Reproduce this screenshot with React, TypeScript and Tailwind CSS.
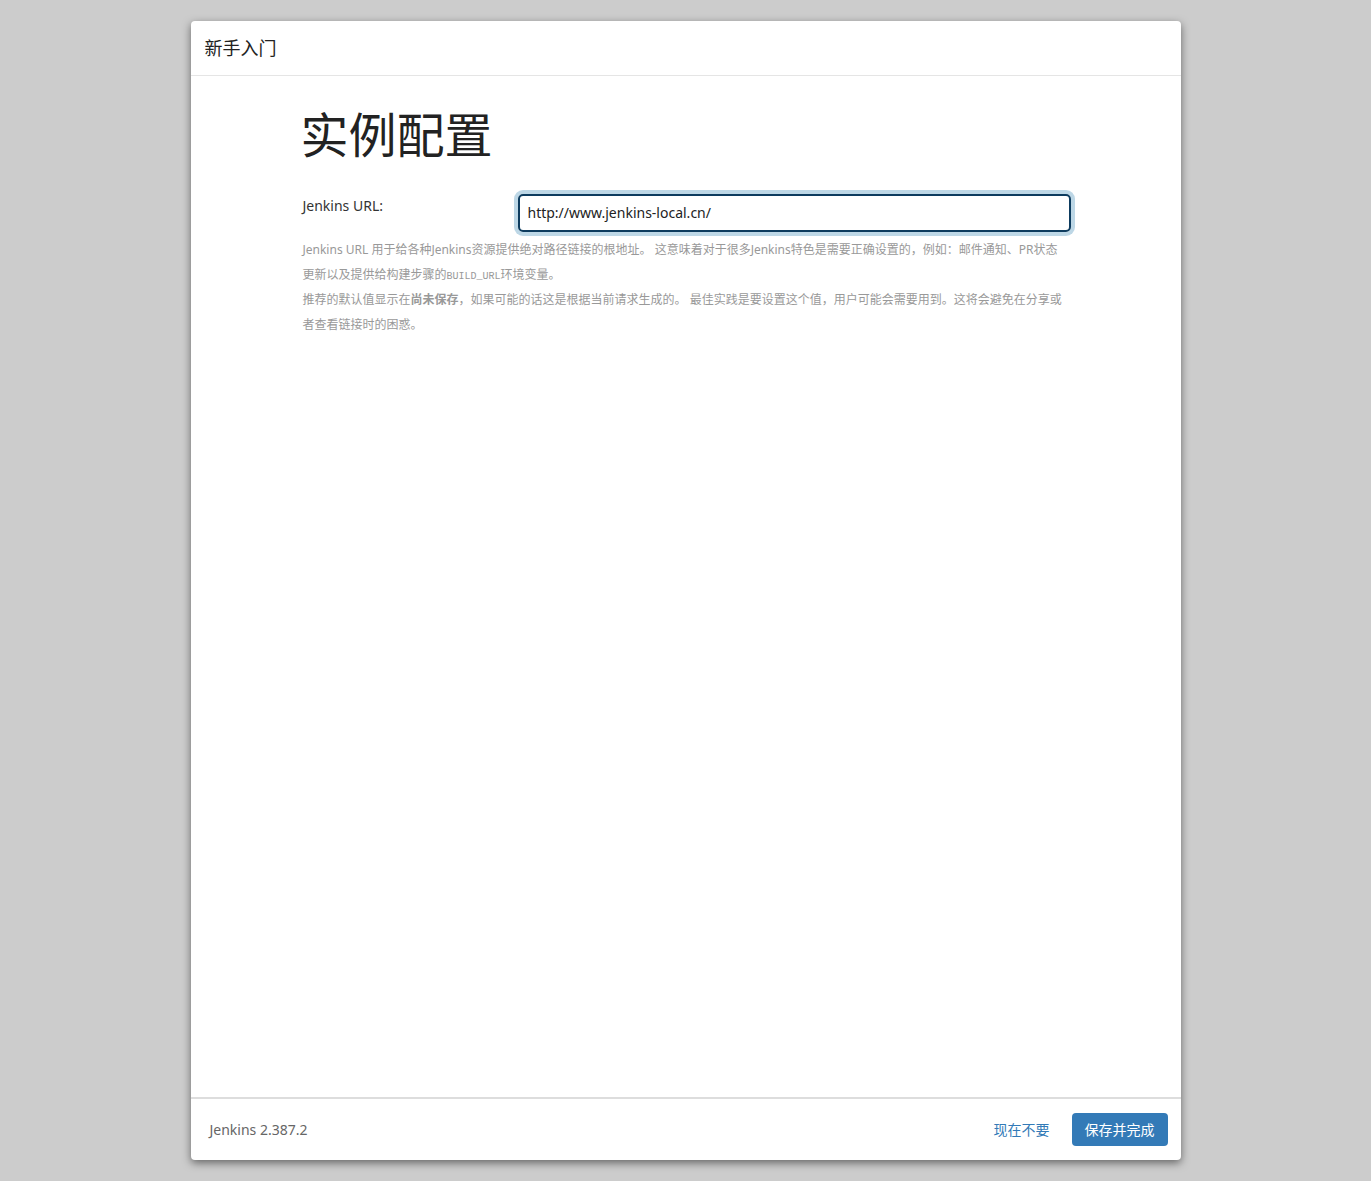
const cjk = '"Noto Sans", "Noto Sans CJK SC", sans-serif';

function HelpText() {
  return (
    <div className="mt-[5px] pl-[2px] pr-[6px] text-[12px] leading-[25px] text-[#999]">
      <p>
        Jenkins URL 用于给各种Jenkins资源提供绝对路径链接的根地址。 这意味着对于很多Jenkins特色是需要正确设置的，例如：邮件通知、PR状态更新以及提供给构建步骤的
        <code className="font-['Liberation_Mono',monospace] text-[10px] leading-none">BUILD_URL</code>
        环境变量。
      </p>
      <p>
        推荐的默认值显示在<strong className="font-bold">尚未保存</strong>，如果可能的话这是根据当前请求生成的。 最佳实践是要设置这个值，用户可能会需要用到。这将会避免在分享或者查看链接时的困惑。
      </p>
    </div>
  );
}

export default function App() {
  return (
    <div
      className="flex min-h-screen justify-center bg-[#cccccc] py-[21px]"
      style={{ fontFamily: cjk }}
    >
      <div className="flex h-[1139px] w-[990px] flex-col rounded-[4px] bg-white shadow-[0_3px_9px_rgba(0,0,0,0.5)]">
        <div className="flex h-[55px] items-center border-b border-[#e5e5e5] px-[14px]">
          <h4 className="text-[18px] text-[#222]">新手入门</h4>
        </div>

        <div className="flex-1">
          <div className="mx-auto w-[770px]">
            <h1 className="mt-[33px] text-[48px] leading-[1.1] text-[#222]">实例配置</h1>

            <div className="mt-[32px] flex">
              <label className="w-[217px] pl-[2px] pt-[1px] text-[14px] text-[#333]">
                Jenkins URL:
              </label>
              <input
                className="h-[38px] flex-1 rounded-[5px] border-2 border-[#0d3b5e] px-[8px] text-[14px] text-[#222] shadow-[0_0_0_4px_#bdd7e6] outline-none"
                defaultValue="http://www.jenkins-local.cn/"
              />
            </div>

            <HelpText />
          </div>
        </div>

        <div className="flex h-[63px] items-center justify-between border-t-2 border-[#dddddd] pl-[19px] pr-[13px]">
          <span className="text-[14px] text-[#666]">Jenkins 2.387.2</span>
          <div className="flex items-center gap-[22px]">
            <a className="cursor-pointer text-[14px] text-[#337ab7]">现在不要</a>
            <button className="h-[33px] rounded-[4px] bg-[#337ab7] px-[13px] text-[14px] text-white">
              保存并完成
            </button>
          </div>
        </div>
      </div>
    </div>
  );
}
